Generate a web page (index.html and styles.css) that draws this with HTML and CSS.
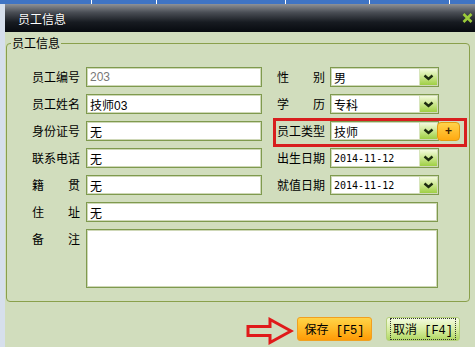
FILE: index.html
```html
<!DOCTYPE html>
<html lang="zh-CN">
<head>
  <meta charset="utf-8">
  <title>员工信息</title>
  <link rel="stylesheet" href="styles.css">
</head>
<body>

  <div class="strip"><span class="strip_cell c1"></span><span class="strip_cell c2"></span><span class="strip_cell c3"></span><span class="strip_cell c4"></span><span class="strip_cell c5"></span><span class="strip_cell"></span></div>

  <div class="page">
    <div class="side"></div>

    <div class="win">
      <div class="win_title">
        <span>员工信息</span>
        <svg class="win_close" width="11" height="10" viewBox="0 0 11 10"><path d="M1.5 1 L9.5 9 M9.5 1 L1.5 9" stroke="#9ccc3a" stroke-width="2.6" fill="none"/></svg>
      </div>

      <div class="win_body">
        <fieldset class="box">
          <legend>员工信息</legend>
          <div class="form">
            <label class="lbl">员工编号</label>
            <input class="txt txt-ro" type="text" value="203">
            <label class="lbl">性别</label>
            <div class="sel"><span>男</span><i class="drop"><svg width="11" height="7" viewBox="0 0 11 7"><path d="M1.5 1.5 L5.5 5 L9.5 1.5" stroke="#1c2a10" stroke-width="2.4" fill="none"/></svg></i></div>
            <span></span>

            <label class="lbl">员工姓名</label>
            <input class="txt" type="text" value="技师03">
            <label class="lbl">学历</label>
            <div class="sel"><span>专科</span><i class="drop"><svg width="11" height="7" viewBox="0 0 11 7"><path d="M1.5 1.5 L5.5 5 L9.5 1.5" stroke="#1c2a10" stroke-width="2.4" fill="none"/></svg></i></div>
            <span></span>

            <label class="lbl">身份证号</label>
            <input class="txt" type="text" value="无">
            <label class="lbl type-lbl">员工类型</label>
            <div class="sel type-sel"><span>技师</span><i class="drop"><svg width="11" height="7" viewBox="0 0 11 7"><path d="M1.5 1.5 L5.5 5 L9.5 1.5" stroke="#1c2a10" stroke-width="2.4" fill="none"/></svg></i></div>
            <button class="plus" type="button">+</button>
            <div class="mark"></div>

            <label class="lbl">联系电话</label>
            <input class="txt" type="text" value="无">
            <label class="lbl">出生日期</label>
            <div class="sel sel-date"><span>2014-11-12</span><i class="drop"><svg width="11" height="7" viewBox="0 0 11 7"><path d="M1.5 1.5 L5.5 5 L9.5 1.5" stroke="#1c2a10" stroke-width="2.4" fill="none"/></svg></i></div>
            <span></span>

            <label class="lbl">籍贯</label>
            <input class="txt" type="text" value="无">
            <label class="lbl">就值日期</label>
            <div class="sel sel-date"><span>2014-11-12</span><i class="drop"><svg width="11" height="7" viewBox="0 0 11 7"><path d="M1.5 1.5 L5.5 5 L9.5 1.5" stroke="#1c2a10" stroke-width="2.4" fill="none"/></svg></i></div>
            <span></span>

            <label class="lbl lbl-first">住址</label>
            <input class="txt wide" type="text" value="无">

            <label class="lbl lbl-first">备注</label>
            <textarea class="txt wide memo"></textarea>
          </div>
        </fieldset>

        <div class="actions">
          <svg class="arrow" width="48" height="28" viewBox="0 0 48 28"><path d="M2 9.5 H24 V2.5 L45 14 L24 25.5 V18.5 H2 Z" stroke="#e01a1a" stroke-width="3" fill="none" stroke-linejoin="miter"/></svg>
          <button class="btn btn-save" type="button">保存 [F5]</button>
          <button class="btn btn-cancel" type="button"><span>取消 [F4]</span></button>
        </div>
      </div>
    </div>
  </div>

</body>
</html>
```

FILE: styles.css
```css
  html,
  body {
    margin: 0;
    height: 100%;
  }

  body {
    background: #eef3f9;
    font-family: "Noto Sans CJK SC", sans-serif;
    font-size: 12px;
    color: #000;
    overflow: hidden;
  }

  /* grid header peeking out above the dialog */
  .strip {
    display: flex;
    height: 4px;
    background: #3f74c4;
  }
  .strip_cell {
    flex: none;
    border-right: 1px solid #fff;
  }
  .strip_cell:last-child {
    flex: 1;
    border-right: 0;
  }
  .c1 { width: 91px; }
  .c2 { width: 64px; }
  .c3 { width: 128px; }
  .c4 { width: 83px; }
  .c5 { width: 79px; }

  .page {
    display: flex;
  }
  .side {
    width: 5px;
    background: #d6dfec;
  }

  .win {
    flex: 1;
    min-width: 0;
  }
  .win_title {
    height: 28px;
    display: flex;
    align-items: center;
    justify-content: space-between;
    padding: 0 2px 0 13px;
    background: linear-gradient(#8d9197 0%, #4a4e55 30%, #171b21 65%, #070a0f 100%);
    color: #fff;
    font-size: 12px;
    text-shadow: 0 0 1px #000;
  }
  .win_close {
    margin-bottom: 1px;
  }

  .win_body {
    background: #d1ddbd;
    padding: 3px 5px 6px 1px;
  }

  .box {
    margin: 0;
    padding: 0;
    min-width: 0;
    border: 1px solid #8aa04c;
    border-radius: 4px;
  }
  .box legend {
    margin-left: 4px;
    padding: 0 1px;
    line-height: 16px;
    font-size: 12px;
  }

  .form {
    display: grid;
    grid-template-columns: 54px 191px 53px 109px 24px;
    grid-template-rows: repeat(6, 20px) 59px;
    row-gap: 7px;
    padding: 16px 0 13px 25px;
  }

  .lbl {
    width: 48px;
    white-space: nowrap;
    line-height: 20px;
    text-align: justify;
    text-align-last: justify;
  }
  .lbl-first {
    grid-column: 1;
  }
  .type-lbl {
    grid-area: 3 / 3;
  }
  .type-sel {
    grid-area: 3 / 4;
  }

  .txt {
    box-sizing: border-box;
    width: 176px;
    height: 20px;
    margin: 0;
    padding: 0 3px;
    border: 1px solid #7f9a4e;
    box-shadow: inset 0 0 0 1px #cfd8b8;
    background: #fff;
    font-family: "Liberation Sans", "Noto Sans CJK SC", sans-serif;
    font-size: 12px;
    color: #000;
    outline: none;
  }
  .txt-ro {
    color: #777;
  }
  .wide {
    grid-column: 2 / 5;
    width: 352px;
  }
  .memo {
    height: 59px;
    resize: none;
  }

  .sel {
    box-sizing: border-box;
    height: 20px;
    display: flex;
    align-items: center;
    justify-content: space-between;
    padding: 0 1px 0 3px;
    border: 1px solid #7f9a4e;
    box-shadow: inset 0 0 0 1px #cfd8b8;
    background: #fff;
    font-size: 12px;
  }
  .sel-date span {
    font-family: "DejaVu Sans Mono", monospace;
    font-size: 10px;
  }
  .drop {
    width: 17px;
    height: 16px;
    display: flex;
    align-items: center;
    justify-content: center;
    background: linear-gradient(#f3fadc, #c6e486 55%, #9fcf44);
    border-left: 1px solid #d8e6bc;
  }

  .plus {
    grid-area: 3 / 5;
    width: 23px;
    height: 19px;
    margin: 1px 0 0 -2px;
    padding: 0;
    border: 1px solid #e39a10;
    border-radius: 4px;
    background: linear-gradient(#ffd24a, #ffaa12);
    color: #402000;
    font: bold 12px "Liberation Sans", sans-serif;
    line-height: 15px;
  }

  /* red annotation frame round the staff type row */
  .mark {
    grid-area: 3 / 3 / 4 / 6;
    margin: -3px -4px -6px -4px;
    border: 3px solid #d81e1e;
    pointer-events: none;
  }

  .actions {
    display: flex;
    justify-content: flex-end;
    align-items: center;
    margin-top: 11px;
    padding-right: 10px;
  }
  .arrow {
    margin: 4px 3px 0 0;
  }
  .btn {
    height: 24px;
    padding: 0;
    border-radius: 3px;
    font-family: "Liberation Mono", "Noto Sans CJK SC", monospace;
    font-size: 12px;
    color: #000;
    white-space: nowrap;
  }
  .btn-save {
    width: 75px;
    border: 1px solid #f0a020;
    background: linear-gradient(#ffd448, #ffb420 60%, #ff9a06);
  }
  .btn-cancel {
    width: 74px;
    margin-left: 14px;
    border: 1px solid #b4d07a;
    background: linear-gradient(#f4fbe2, #d6ec9e 55%, #b0d862);
  }
  .btn-cancel span {
    display: inline-block;
    padding: 1px 2px;
    outline: 1px dotted #333;
  }
```
